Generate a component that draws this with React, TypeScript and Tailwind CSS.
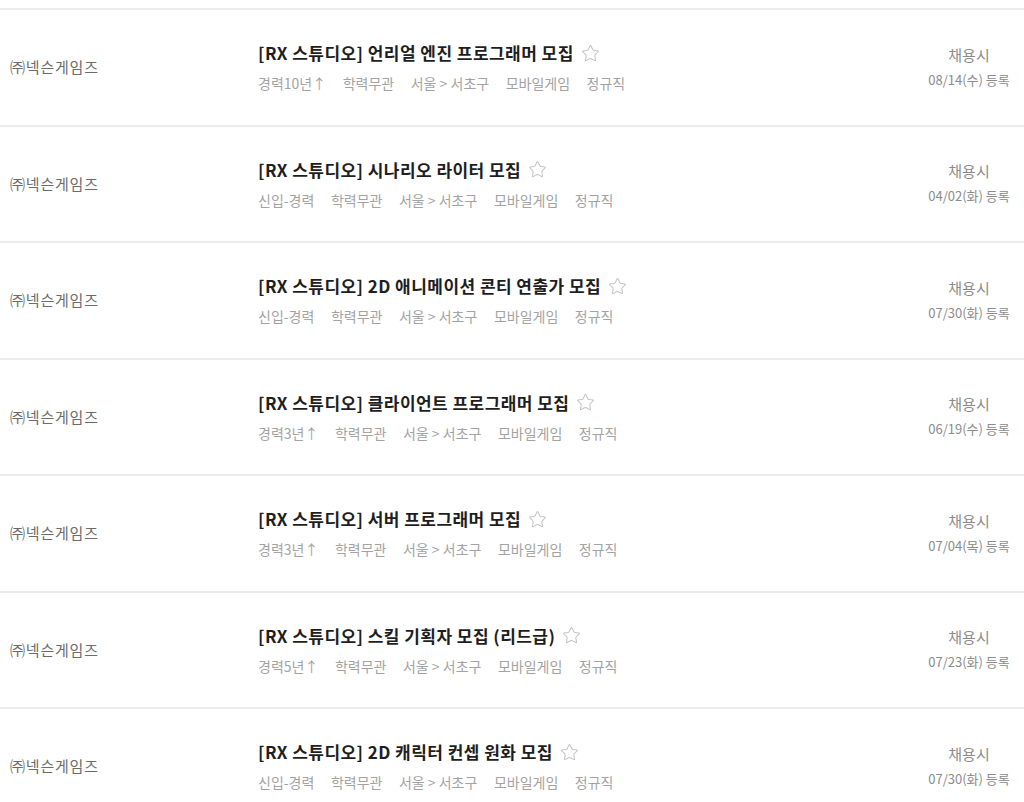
import { Star } from "lucide-react";

type Job = {
  title: string;
  career: string;
  date: string;
};

const jobs: Job[] = [
  { title: "[RX 스튜디오] 언리얼 엔진 프로그래머 모집", career: "경력10년↑", date: "08/14(수) 등록" },
  { title: "[RX 스튜디오] 시나리오 라이터 모집", career: "신입-경력", date: "04/02(화) 등록" },
  { title: "[RX 스튜디오] 2D 애니메이션 콘티 연출가 모집", career: "신입-경력", date: "07/30(화) 등록" },
  { title: "[RX 스튜디오] 클라이언트 프로그래머 모집", career: "경력3년↑", date: "06/19(수) 등록" },
  { title: "[RX 스튜디오] 서버 프로그래머 모집", career: "경력3년↑", date: "07/04(목) 등록" },
  { title: "[RX 스튜디오] 스킬 기획자 모집 (리드급)", career: "경력5년↑", date: "07/23(화) 등록" },
  { title: "[RX 스튜디오] 2D 캐릭터 컨셉 원화 모집", career: "신입-경력", date: "07/30(화) 등록" },
];

function JobRow({ job }: { job: Job }) {
  return (
    <div className="flex h-[116.5px] items-center border-b-2 border-[#ebebeb]">
      <div className="w-[258px] shrink-0 pl-[10px] text-[15px] tracking-[0.8px] text-[#6b6b6b]">㈜넥슨게임즈</div>
      <div className="flex flex-1 flex-col">
        <div className="flex items-center gap-[7px] text-[17px] leading-[24px] font-bold tracking-[0.45px] text-[#1e1e1e]">
          <span>{job.title}</span>
          <Star size={19} strokeWidth={1.3} className="text-[#c4c4c4]" />
        </div>
        <div className="mt-[8px] flex gap-[16.5px] text-[14px] leading-[20px] text-[#a3a3a3]">
          <span>{job.career}</span>
          <span>학력무관</span>
          <span>서울 &gt; 서초구</span>
          <span>모바일게임</span>
          <span>정규직</span>
        </div>
      </div>
      <div className="flex w-[110px] shrink-0 flex-col items-center gap-[5px] text-[13px] leading-[20px] text-[#8c8c8c]">
        <span className="text-[15px]">채용시</span>
        <span>{job.date}</span>
      </div>
    </div>
  );
}

export default function App() {
  return (
    <div className="min-h-[802px] overflow-hidden bg-white font-['Noto_Sans_CJK_KR','Noto_Sans',sans-serif]">
      <div className="h-[10px] border-b-2 border-[#ebebeb]" />
      {jobs.map((job, i) => (
        <JobRow key={i} job={job} />
      ))}
    </div>
  );
}
